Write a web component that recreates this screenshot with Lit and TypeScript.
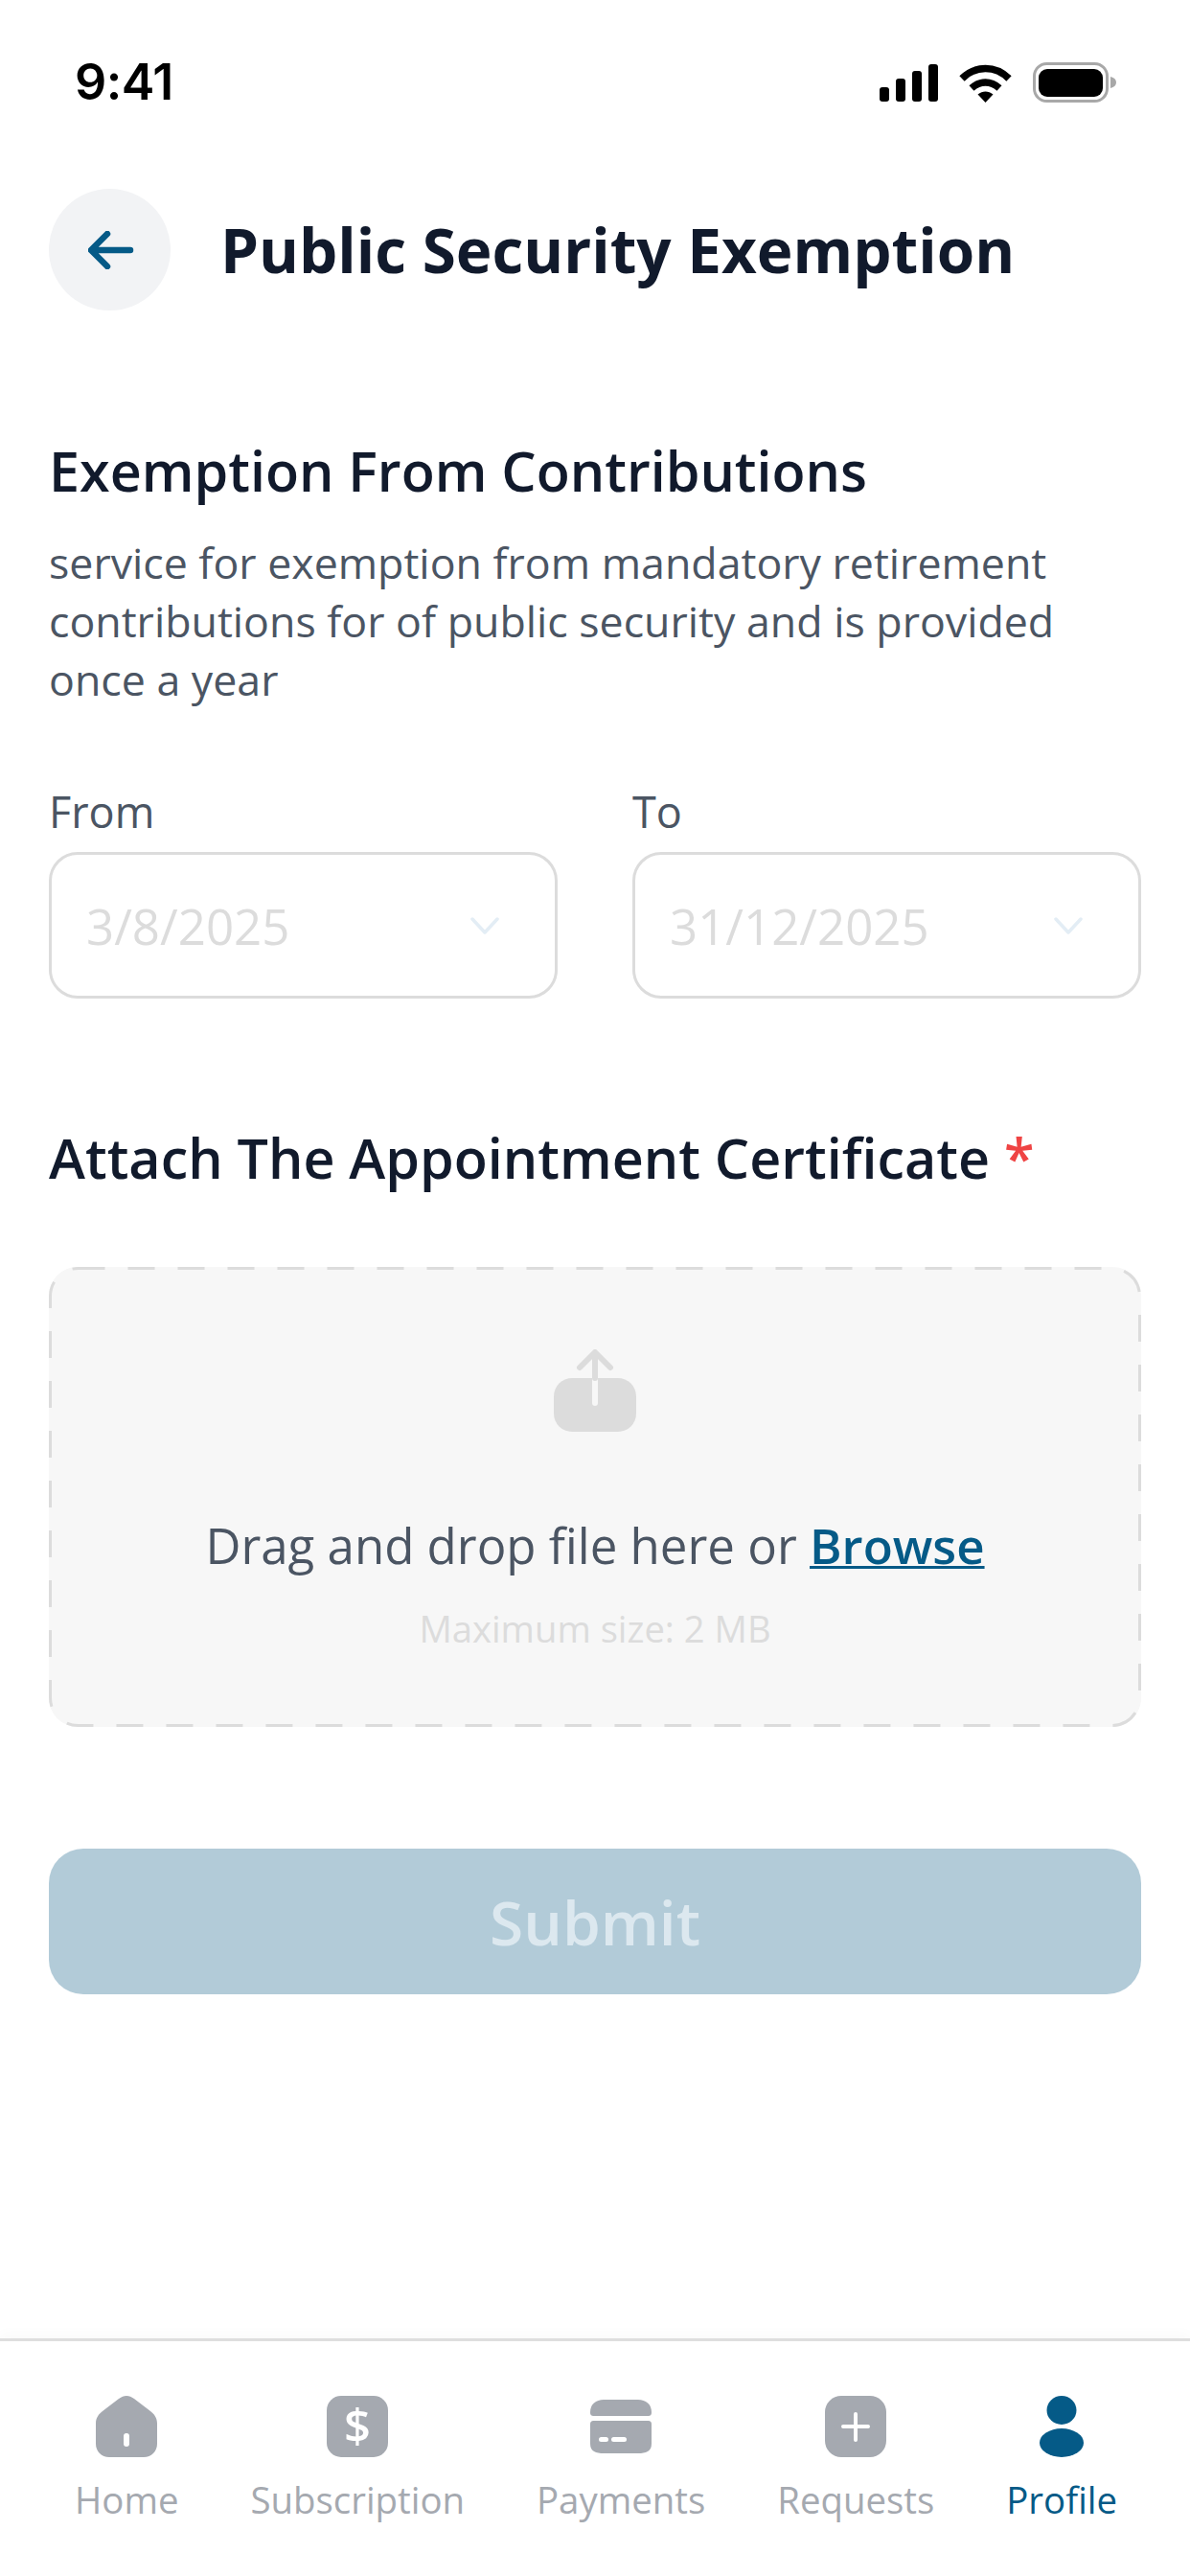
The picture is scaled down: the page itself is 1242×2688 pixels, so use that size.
import { LitElement, html, css, svg } from "lit";
import { customElement } from "lit/decorators.js";

const navItems = [
  { label: "Home", w: 64, icon: svg`<path d="M32 0c3 0 5 1 8 3l17 13c4 3 7 7 7 13v21c0 8-6 14-14 14H14C6 64 0 58 0 50V29c0-6 3-10 7-13L24 3c3-2 5-3 8-3z" fill="#a5a9b0"/><rect x="29" y="39" width="6" height="14" rx="3" fill="#fff"/>` },
  { label: "Subscription", w: 64, icon: svg`<rect width="64" height="64" rx="15" fill="#a5a9b0"/><text x="32" y="49" text-anchor="middle" font-family="Open Sans" font-weight="600" font-size="49" fill="#fff">$</text>` },
  { label: "Payments", w: 64, icon: svg`<path d="M0 17C0 9 6 4 14 4h36c8 0 14 5 14 13 0 3-1 4-4 4H4c-3 0-4-1-4-4z" fill="#a5a9b0"/><path d="M4 26h56c3 0 4 1 4 4v20c0 8-6 10-14 10H14C6 60 0 58 0 50V30c0-3 1-4 4-4z" fill="#a5a9b0"/><rect x="9" y="43" width="10" height="5" rx="2.5" fill="#fff"/><rect x="22" y="43" width="16" height="5" rx="2.5" fill="#fff"/>` },
  { label: "Requests", w: 64, icon: svg`<rect width="64" height="64" rx="17" fill="#a5a9b0"/><path d="M32 19v27M19 32h26" stroke="#fff" stroke-width="4" stroke-linecap="round"/>` },
  { label: "Profile", w: 46, active: true, icon: svg`<ellipse cx="23" cy="15" rx="15.5" ry="15" fill="#055a87"/><ellipse cx="23" cy="49" rx="23" ry="15" fill="#055a87"/>` },
];

@customElement("app-root")
export class AppRoot extends LitElement {
  static styles = css`
    :host { display: block; font-family: "Open Sans", sans-serif; }
    .page { width: 1242px; height: 2688px; background: #fff; display: flex; flex-direction: column; overflow: hidden; }
    .status { display: flex; justify-content: space-between; padding: 65px 76px 0 78px; height: 132px; box-sizing: border-box; }
    .time { font-family: Inter, sans-serif; font-weight: 600; font-size: 52px; line-height: 42px; color: #000; letter-spacing: -0.5px; }
    .status-icons { display: flex; gap: 22px; align-items: flex-start; height: 42px; }
    .status-icons svg { display: block; }
    .header { display: flex; align-items: center; gap: 52px; padding: 65px 51px 0; }
    .back { width: 127px; height: 127px; border-radius: 50%; background: #f2f3f5; display: flex; align-items: center; justify-content: center; flex: none; padding-left: 3px; box-sizing: border-box; }
    .title { margin: 0; font-size: 63.8px; line-height: 80px; font-weight: 700; color: #111a2c; }
    .content { padding: 0 51px; flex: 1; }
    .h2 { margin: 0; font-size: 57.4px; line-height: 70px; font-weight: 600; color: #111a2c; }
    .intro { margin-top: 132px; }
    .desc { margin: 30px 0 0; font-size: 44.7px; line-height: 61px; color: #4b5563; }
    .dates { display: grid; grid-template-columns: 531px 531px; gap: 78px; margin-top: 78px; }
    .label { font-size: 45px; line-height: 60px; color: #4b5563; margin-bottom: 12px; }
    .field { height: 153px; box-sizing: border-box; border: 3px solid #dcdcdc; border-radius: 30px; display: flex; align-items: center; justify-content: space-between; padding: 0 58px 0 36px; font-size: 51px; color: #dcdcdc; }
    .attach { margin-top: 131px; }
    .star { color: #ef4444; }
    .drop { position: relative; margin-top: 79px; height: 480px; box-sizing: border-box; background: #f7f7f7; border-radius: 30px; display: flex; flex-direction: column; align-items: center; padding-top: 86px; }
    .dash { position: absolute; inset: 0; pointer-events: none; }
    .drop-icon { display: block; }
    .drop-text { margin-top: 84px; font-size: 51px; line-height: 68px; color: #4b5563; }
    .browse { color: #055a87; font-weight: 600; text-decoration: underline; text-decoration-thickness: 3px; }
    .max { margin-top: 27px; font-size: 38.2px; line-height: 52px; color: #dcdcdc; }
    .submit { margin-top: 127px; height: 152px; border-radius: 36px; background: #b2cbd8; color: #dce8ef; font-size: 64px; font-weight: 600; display: flex; align-items: center; justify-content: center; }
    .nav { height: 248px; box-sizing: border-box; border-top: 3px solid #dedede; box-shadow: 0 -6px 12px rgba(0, 0, 0, 0.02); display: flex; justify-content: space-between; padding: 57px 76px 0 78px; background: #fff; }
    .item { display: flex; flex-direction: column; align-items: center; gap: 17px; font-size: 38.4px; line-height: 54px; color: #a5a9b0; }
    .item.active { color: #055a87; }
    .item svg { display: block; overflow: visible; }
  `;

  render() {
    return html`
      <div class="page">
        <div class="status">
          <div class="time">9:41</div>
          <div class="status-icons">
            <svg width="61" height="42" viewBox="0 0 61 42" fill="#000">
              <rect x="0" y="26" width="10" height="15" rx="3" />
              <rect x="17" y="17" width="10" height="24" rx="3" />
              <rect x="34" y="9" width="10" height="32" rx="3" />
              <rect x="51" y="2" width="10" height="39" rx="3" />
            </svg>
            <svg width="55" height="42" viewBox="0 0 55 42">
              <path d="M3 17C17 3 38 3 52 17" fill="none" stroke="#000" stroke-width="7.5" />
              <path d="M13 27c9-8 20-8 29 0" fill="none" stroke="#000" stroke-width="7.5" />
              <path d="M19.500 33.500c5-4 11-4 16 0L27.500 42z" fill="#000" />
            </svg>
            <svg width="88" height="42" viewBox="0 0 88 42">
              <rect x="1.500" y="1.500" width="76" height="39" rx="13" fill="none" stroke="#a8a8a8" stroke-width="3" />
              <rect x="6" y="7" width="67" height="29" rx="9" fill="#000" />
              <path d="M81 15c4 1 6 3 6 6s-2 5-6 6z" fill="#a8a8a8" />
            </svg>
          </div>
        </div>

        <div class="header">
          <div class="back">
            <svg width="48" height="40" viewBox="0 0 48 40" fill="none" stroke="#055a87" stroke-width="6.5" stroke-linecap="round" stroke-linejoin="round">
              <path d="M44 20H4M20 3 3 20l17 17" />
            </svg>
          </div>
          <h1 class="title">Public Security Exemption</h1>
        </div>

        <div class="content">
          <h2 class="h2 intro">Exemption From Contributions</h2>
          <p class="desc">service for exemption from mandatory retirement contributions for of public security and is provided once a year</p>
          <div class="dates">
            ${[["From", "3/8/2025"], ["To", "31/12/2025"]].map(([l, v]) => html`
              <div>
                <div class="label">${l}</div>
                <div class="field">
                  <span>${v}</span>
                  <svg width="30" height="20" viewBox="0 0 30 20" fill="none" stroke="#e3edf5" stroke-width="3.500" stroke-linecap="round" stroke-linejoin="round"><path d="M2 3l13 14L28 3" /></svg>
                </div>
              </div>
            `)}
          </div>
          <h2 class="h2 attach">Attach The Appointment Certificate <span class="star">*</span></h2>
          <div class="drop">
            <svg class="dash" width="1140" height="480" viewBox="0 0 1140 480" fill="none">
              <rect x="1.500" y="1.500" width="1137" height="477" rx="29" stroke="#dcdcdc" stroke-width="3" stroke-dasharray="28 24" />
            </svg>
            <svg class="drop-icon" width="86" height="86" viewBox="0 0 86 86">
              <rect x="0" y="30" width="86" height="56" rx="19" fill="#dcdcdc" />
              <path d="M43 56V30" stroke="#f7f7f7" stroke-width="6" stroke-linecap="round" />
              <path d="M43 30V4M27 19 43 3l16 16" fill="none" stroke="#dcdcdc" stroke-width="6" stroke-linecap="round" stroke-linejoin="round" />
            </svg>
            <div class="drop-text">Drag and drop file here or <span class="browse">Browse</span></div>
            <div class="max">Maximum size: 2 MB</div>
          </div>
          <div class="submit">Submit</div>
        </div>

        <div class="nav">
          ${navItems.map((n) => html`
            <div class="item ${n.active ? "active" : ""}">
              <svg width=${n.w} height="64" viewBox="0 0 ${n.w} 64">${n.icon}</svg>
              <span>${n.label}</span>
            </div>
          `)}
        </div>
      </div>
    `;
  }
}
